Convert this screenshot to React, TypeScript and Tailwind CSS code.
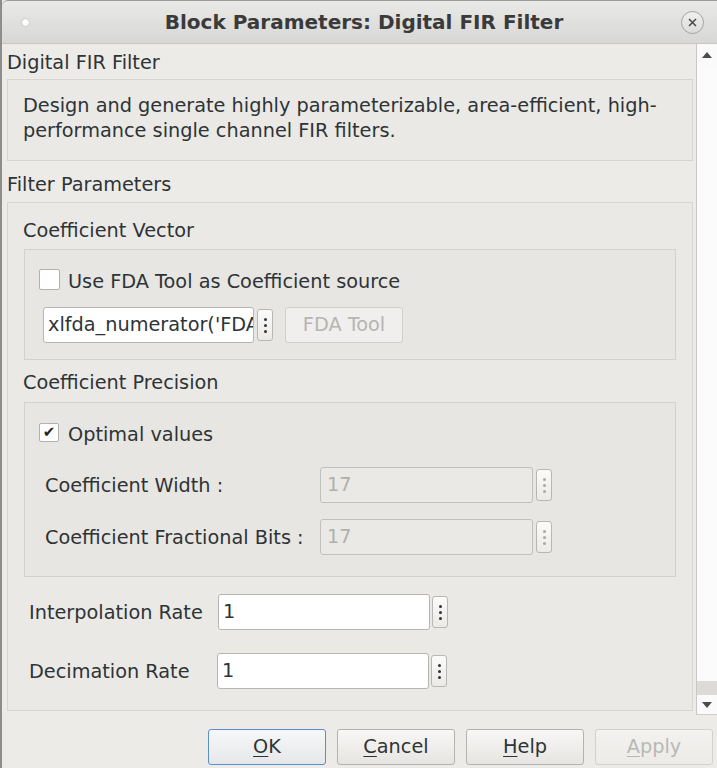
import React from "react";

function Dots({ disabled = false }: { disabled?: boolean }) {
  const dot = disabled ? "bg-[#a9a9a7]" : "bg-[#2e3436]";
  return (
    <div className="w-[16px] h-[32px] shrink-0 rounded-[3px] border border-[#b9b7b3] bg-linear-to-b from-[#fbfbfa] to-[#eceae7] flex flex-col items-center justify-center gap-[3px]">
      <span className={`block w-[3px] h-[3px] rounded-full ${dot}`} />
      <span className={`block w-[3px] h-[3px] rounded-full ${dot}`} />
      <span className={`block w-[3px] h-[3px] rounded-full ${dot}`} />
    </div>
  );
}

function Field({ value, width, disabled = false }: { value: string; width: string; disabled?: boolean }) {
  return (
    <div
      className={`${width} h-[36px] shrink-0 rounded-[3px] border flex items-center overflow-hidden whitespace-nowrap ${
        disabled
          ? "bg-[#ebe9e6] border-[#c2c0bc] text-[#b1b0ad] pl-[6px]"
          : "bg-white border-[#b7b5b1] pl-[4px]"
      }`}
    >
      {value}
    </div>
  );
}

function DialogButton({ label, mnemonic, focused = false, disabled = false }: { label: string; mnemonic: string; focused?: boolean; disabled?: boolean }) {
  return (
    <div
      className={`w-[118px] h-[36px] rounded-[3px] border flex items-center justify-center bg-linear-to-b ${
        focused
          ? "border-[#5b8fc9] from-[#f7f8fa] to-[#e6e7e8]"
          : disabled
          ? "border-[#d3d1cd] from-[#f3f2f0] to-[#ecebe8] text-[#b9b8b5]"
          : "border-[#b5b3af] from-[#f8f7f6] to-[#e7e5e2]"
      }`}
    >
      <span>
        <span className="underline underline-offset-[3px]">{mnemonic}</span>
        {label.slice(1)}
      </span>
    </div>
  );
}

export default function App() {
  return (
    <div className="w-[717px] h-[768px] flex flex-col overflow-hidden bg-[#edebe8] border-l-2 border-[#8d8d8b] text-[#2e3436] font-['DejaVu_Sans',sans-serif] text-[19.3px]">
      {/* Title bar */}
      <div className="h-[44px] shrink-0 flex items-center pl-[19px] pr-[13px] rounded-tl-[6px] border-t border-[#9a9a98] border-b border-b-[#c8c7c4] bg-linear-to-b from-[#e9e9e8] to-[#d7d7d5]">
        <div className="w-[9px] h-[9px] rounded-full bg-white border border-[#c9c9c7]" />
        <div className="flex-1 text-center pl-[17px] text-[20px] font-bold text-[#3a3a3a]">
          Block Parameters: Digital FIR Filter
        </div>
        <div className="w-[23px] h-[23px] rounded-full border border-[#a5a5a3] bg-linear-to-b from-[#f0f0ef] to-[#dcdcda] flex items-center justify-center">
          <svg width="9" height="9" viewBox="0 0 9 9">
            <path d="M1 1L8 8M8 1L1 8" stroke="#4a4a4a" strokeWidth="1.5" />
          </svg>
        </div>
      </div>

      {/* Body */}
      <div className="h-[672px] shrink-0 flex">
        <div className="flex-1 pl-[5px] pr-[3px] pt-[7px] overflow-hidden">
          <div className="leading-[24px]">Digital FIR Filter</div>

          <div className="mt-[4px] h-[82px] border border-[#d7d5d1] bg-[#ebe9e6] pt-[13px] px-[15px] leading-[25px]">
            Design and generate highly parameterizable, area-efficient, high-
            <br />
            performance single channel FIR filters.
          </div>

          <div className="mt-[12px] leading-[24px]">Filter Parameters</div>

          <div className="mt-[5px] border border-[#d7d5d1] bg-[#ebe9e6] pt-[16px] pb-[21px]">
            <div className="pl-[15px] leading-[24px]">Coefficient Vector</div>

            {/* Coefficient vector group */}
            <div className="mt-[6px] mx-[16px] border border-[#d3d1cd] bg-[#e8e6e2] pt-[19px] pb-[16px] pl-[14px]">
              <div className="h-[21px] flex items-center gap-[8px]">
                <div className="w-[21px] h-[21px] bg-white border border-[#b3b1ad] rounded-[2px]" />
                <span className="pt-[5px]">Use FDA Tool as Coefficient source</span>
              </div>
              <div className="mt-[17px] ml-[4px] flex items-center">
                <Field value="xlfda_numerator('FDA" width="w-[211px]" />
                <div className="ml-[3px]">
                  <Dots />
                </div>
                <div className="ml-[12px] w-[118px] h-[36px] rounded-[3px] border border-[#d1cfcb] bg-[#f0efed] text-[#b6b5b2] flex items-center justify-center">
                  FDA Tool
                </div>
              </div>
            </div>

            <div className="mt-[11px] pl-[15px] leading-[24px]">Coefficient Precision</div>

            {/* Coefficient precision group */}
            <div className="mt-[7px] mx-[16px] border border-[#d3d1cd] bg-[#e8e6e2] pt-[20px] pb-[21px] pl-[14px]">
              <div className="h-[19px] flex items-center gap-[9px]">
                <div className="w-[20px] h-[19px] bg-white border border-[#b3b1ad] rounded-[2px] flex items-center justify-center text-[15px] font-bold leading-none text-[#1f2325]">
                  ✔
                </div>
                <span className="pt-[6px]">Optimal values</span>
              </div>
              <div className="mt-[25px] ml-[6px] flex items-center">
                <div className="w-[275px] pt-[3px]">Coefficient Width :</div>
                <Field value="17" width="w-[213px]" disabled />
                <div className="ml-[3px]">
                  <Dots disabled />
                </div>
              </div>
              <div className="mt-[16px] ml-[6px] flex items-center">
                <div className="w-[275px] pt-[3px]">Coefficient Fractional Bits :</div>
                <Field value="17" width="w-[213px]" disabled />
                <div className="ml-[3px]">
                  <Dots disabled />
                </div>
              </div>
            </div>

            <div className="mt-[17px] pl-[21px] flex items-center">
              <div className="w-[189px] pt-[3px]">Interpolation Rate</div>
              <Field value="1" width="w-[212px]" />
              <div className="ml-[2px]">
                <Dots />
              </div>
            </div>
            <div className="mt-[23px] pl-[21px] flex items-center">
              <div className="w-[188px] pt-[3px]">Decimation Rate</div>
              <Field value="1" width="w-[212px]" />
              <div className="ml-[2px]">
                <Dots />
              </div>
            </div>
          </div>
        </div>

        {/* Scrollbar */}
        <div className="w-[21px] h-[671px] shrink-0 flex flex-col border-l border-[#c9c8c5] border-b border-b-[#d0cfcc] bg-[#fafafa]">
          <div className="h-[22px] flex items-center justify-center">
            <svg width="10" height="6" viewBox="0 0 10 6">
              <path d="M0 6L5 0L10 6Z" fill="#4b4b4b" />
            </svg>
          </div>
          <div className="flex-1 bg-[#fbfbfb]" />
          <div className="h-[14px] bg-[#dcdbd9]" />
          <div className="h-[19px] flex items-center justify-center">
            <svg width="10" height="6" viewBox="0 0 10 6">
              <path d="M0 0L10 0L5 6Z" fill="#4b4b4b" />
            </svg>
          </div>
        </div>
      </div>

      {/* Buttons */}
      <div className="flex-1 flex justify-end gap-[11px] pt-[13px] pr-[4px]">
        <DialogButton label="OK" mnemonic="O" focused />
        <DialogButton label="Cancel" mnemonic="C" />
        <DialogButton label="Help" mnemonic="H" />
        <DialogButton label="Apply" mnemonic="A" disabled />
      </div>
    </div>
  );
}
